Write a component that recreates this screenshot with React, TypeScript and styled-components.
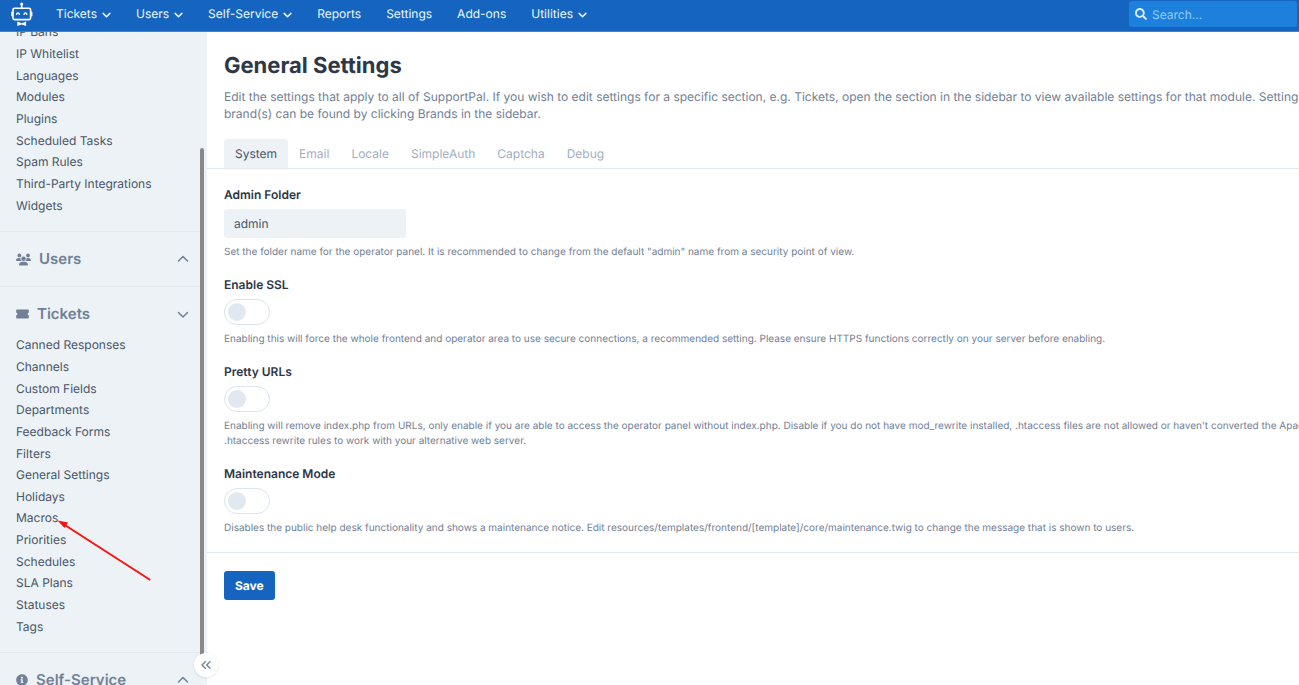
import React from 'react';
import styled, { createGlobalStyle } from 'styled-components';
import { ChevronsLeft } from 'lucide-react';
import { FaInfoCircle, FaSearch } from 'react-icons/fa';
import { FaUsers } from 'react-icons/fa6';

const GlobalStyle = createGlobalStyle`
  *, *::before, *::after { box-sizing: border-box; }
  html, body, #root { height: 100%; }
  body {
    margin: 0;
    overflow: hidden;
    background: #fff;
    color: #4a5568;
    font-family: Inter, "Liberation Sans", sans-serif;
    font-size: 12px;
    text-rendering: geometricPrecision;
  }
  button, input { font: inherit; text-rendering: inherit; }
  h1, h2, p, ul { margin: 0; padding: 0; }
  ul { list-style: none; }
`;

const Page = styled.div`
  display: flex;
  flex-direction: column;
  height: 100vh;
`;

const TopBar = styled.header`
  flex: none;
  display: flex;
  align-items: center;
  height: 32px;
  padding: 0 2px 3px 10px;
  background: #1565c0;
  border-bottom: 1px solid #3b82d6;
`;

const Logo = styled.a`
  display: flex;
  width: 24px;
  margin-right: 22px;
`;

const Nav = styled.nav`
  display: flex;
  gap: 25px;
`;

const NavLink = styled.a`
  display: flex;
  align-items: center;
  gap: 5px;
  color: #ebf8ff;
  line-height: 20px;
  text-decoration: none;
  white-space: nowrap;
`;

const SearchBox = styled.label`
  display: flex;
  align-items: center;
  gap: 5px;
  width: 168px;
  height: 26px;
  margin-left: auto;
  padding: 0 6px;
  border-radius: 3px;
  background: #1e80dd;
  color: #d6ebfb;
`;

const SearchInput = styled.input`
  flex: 1;
  min-width: 0;
  padding: 0;
  border: 0;
  outline: 0;
  background: transparent;
  color: #fff;
  &::placeholder { color: #90cdf4; opacity: 1; }
`;

const Body = styled.div`
  flex: 1;
  display: flex;
  min-height: 0;
`;

const Sidebar = styled.aside`
  position: relative;
  flex: none;
  width: 207px;
  background: #ecf2f6;
`;

const SidebarScroll = styled.div`
  height: 100%;
  margin-right: 3px;
  overflow: hidden;
`;

const Section = styled.section<{ $open?: boolean }>`
  padding-bottom: ${(p) => (p.$open ? 15 : 7)}px;
  border-bottom: 1px solid #e2e8f0;
  &:first-child { margin-top: -11px; }
`;

const SectionToggle = styled.button`
  display: flex;
  align-items: center;
  gap: 8px;
  width: 100%;
  padding: 17px 15px 10px 16px;
  border: 0;
  background: transparent;
  color: #718096;
  font-size: 15px;
  font-weight: 600;
  line-height: 20px;
  text-align: left;
  svg:last-child { margin-left: auto; }
`;

const LinkList = styled.ul<{ $height: number }>`
  display: grid;
  grid-auto-rows: 1fr;
  align-items: center;
  height: ${(p) => p.$height}px;
  padding-left: 16px;
`;

const SideLink = styled.a`
  display: block;
  color: #4a5568;
  line-height: 21px;
  text-decoration: none;
`;

const ScrollThumb = styled.div`
  position: absolute;
  top: 116px;
  bottom: 20px;
  right: 3px;
  width: 4px;
  border-radius: 2px;
  background: #888;
`;

const Collapse = styled.button`
  position: absolute;
  right: -11px;
  bottom: 8px;
  display: flex;
  align-items: center;
  justify-content: center;
  width: 24px;
  height: 24px;
  padding: 0;
  border: 0;
  border-radius: 50%;
  background: #fff;
  color: #718096;
  box-shadow: 0 1px 3px rgba(0, 0, 0, 0.1);
`;

const Pointer = styled.svg`
  position: absolute;
  left: 56px;
  top: 486px;
`;

const Main = styled.main`
  flex: 1;
  min-width: 0;
  overflow: hidden;
`;

const Intro = styled.div`
  padding: 21px 17px 17px;
`;

const Title = styled.h1`
  color: #2d3748;
  font-size: 22px;
  font-weight: 700;
  line-height: 26px;
`;

const Lead = styled.p`
  margin-top: 9px;
  color: #718096;
  line-height: 17px;
  white-space: nowrap;
`;

const Tabs = styled.div`
  display: flex;
  padding-left: 17px;
  border-bottom: 1px solid #e2e8f0;
`;

const Tab = styled.button<{ $active?: boolean }>`
  height: 29px;
  padding: 0 11px;
  border: 0;
  border-radius: 3px 3px 0 0;
  background: ${(p) => (p.$active ? '#ecf2f6' : 'transparent')};
  color: ${(p) => (p.$active ? '#4a5568' : '#a0aec0')};
`;

const Form = styled.form`
  padding-top: 17px;
`;

const Field = styled.div`
  display: flex;
  flex-direction: column;
  align-items: flex-start;
  padding: 0 17px;
  margin-bottom: 16px;
`;

const Label = styled.label`
  color: #2d3748;
  font-weight: 600;
  line-height: 18px;
`;

const TextInput = styled.input`
  width: 182px;
  height: 29px;
  margin-top: 5px;
  padding: 0 10px;
  border: 0;
  border-radius: 3px;
  background: #ecf2f6;
  color: #4a5568;
`;

const Switch = styled.input`
  appearance: none;
  display: flex;
  align-items: center;
  width: 46px;
  height: 26px;
  margin: 5px 0 0;
  padding: 0 3px;
  border: 1px solid #dce4ed;
  border-radius: 13px;
  background: #fff;
  &::before {
    content: '';
    width: 18px;
    height: 18px;
    border-radius: 50%;
    background: #e2e8f0;
  }
  &:checked { justify-content: flex-end; }
`;

const Help = styled.p`
  margin-top: 7px;
  color: #718096;
  font-size: 10px;
  line-height: 15px;
  white-space: nowrap;
`;

const Actions = styled.div`
  padding: 18px 17px;
  border-top: 1px solid #e2e8f0;
`;

const SaveButton = styled.button`
  height: 29px;
  padding: 0 11px;
  border: 0;
  border-radius: 3px;
  background: #1565c0;
  color: #fff;
  font-weight: 700;
`;

const Chevron = ({ up, size }: { up?: boolean; size: number }) => (
  <svg width={size} height={size} viewBox="0 0 12 12" fill="none" stroke="currentColor"
    strokeWidth={size < 12 ? 2 : 1.5} strokeLinecap="round" strokeLinejoin="round" aria-hidden="true">
    <path d={up ? 'M1.500 8 6 3.500l4.500 4.500' : 'M1.500 4.500 6 9l4.500-4.500'} />
  </svg>
);

const TicketIcon = () => (
  <svg width="13" height="10" viewBox="0 0 14 10" preserveAspectRatio="none" fill="currentColor" aria-hidden="true">
    <path d="M1 .5h12a.8.8 0 0 1 .8.8v2.400a1.300 1.300 0 0 0 0 2.600v2.400a.8.8 0 0 1-.8.8H1a.8.8 0 0 1-.8-.8V6.300a1.300 1.300 0 0 0 0-2.600V1.300A.8.8 0 0 1 1 .5Z" />
  </svg>
);

const RobotLogo = () => (
  <svg width="24" height="26" viewBox="0 0 24 26" fill="none" stroke="#fff" strokeWidth="1.600"
    strokeLinecap="round" strokeLinejoin="round" aria-hidden="true">
    <path d="M11.700 4v3" />
    <circle cx="11.700" cy="3" r="1.500" fill="#fff" stroke="none" />
    <rect x="3" y="7.200" width="17.600" height="11.400" rx="1.600" />
    <path d="M2 11.400v3.400M21.600 11.400v3.400" />
    <path d="M6.600 13.400c.3-2 2.500-2 2.800 0M14 13.400c.3-2 2.500-2 2.800 0" strokeWidth="1.400" />
    <path d="M7.300 20.400 11.700 22.200l4.400-1.800v4.600l-4.400-1.600-4.400 1.600Z" fill="#fff" stroke="none" />
  </svg>
);

const navItems = [
  { text: 'Tickets', menu: true },
  { text: 'Users', menu: true },
  { text: 'Self-Service', menu: true },
  { text: 'Reports' },
  { text: 'Settings' },
  { text: 'Add-ons' },
  { text: 'Utilities', menu: true },
];

const coreLinks = ['IP Bans', 'IP Whitelist', 'Languages', 'Modules', 'Plugins', 'Scheduled Tasks',
  'Spam Rules', 'Third-Party Integrations', 'Widgets'];

const ticketLinks = ['Canned Responses', 'Channels', 'Custom Fields', 'Departments', 'Feedback Forms',
  'Filters', 'General Settings', 'Holidays', 'Macros', 'Priorities', 'Schedules', 'SLA Plans',
  'Statuses', 'Tags'];

const tabs = ['System', 'Email', 'Locale', 'SimpleAuth', 'Captcha', 'Debug'];

const Links = ({ items, height }: { items: string[]; height: number }) => (
  <LinkList $height={height}>
    {items.map((item) => (
      <li key={item}><SideLink href="#">{item}</SideLink></li>
    ))}
  </LinkList>
);

export default function App() {
  return (
    <>
      <GlobalStyle />
      <Page>
        <TopBar>
          <Logo href="#" aria-label="Home"><RobotLogo /></Logo>
          <Nav>
            {navItems.map((item) => (
              <NavLink href="#" key={item.text}>
                {item.text}
                {item.menu && <Chevron size={9} />}
              </NavLink>
            ))}
          </Nav>
          <SearchBox>
            <FaSearch size={12} aria-hidden="true" />
            <SearchInput type="search" placeholder="Search..." aria-label="Search" />
          </SearchBox>
        </TopBar>
        <Body>
          <Sidebar>
            <SidebarScroll>
              <Section $open>
                <Links items={coreLinks} height={195} />
              </Section>
              <Section>
                <SectionToggle type="button">
                  <FaUsers size={15} />Users<Chevron up size={12} />
                </SectionToggle>
              </Section>
              <Section $open>
                <SectionToggle type="button">
                  <TicketIcon />Tickets<Chevron size={12} />
                </SectionToggle>
                <Links items={ticketLinks} height={303} />
              </Section>
              <Section>
                <SectionToggle type="button">
                  <FaInfoCircle size={12} />Self-Service<Chevron up size={12} />
                </SectionToggle>
              </Section>
            </SidebarScroll>
            <ScrollThumb />
            <Collapse type="button" aria-label="Collapse sidebar"><ChevronsLeft size={16} /></Collapse>
            <Pointer width="98" height="66" viewBox="0 0 98 66" aria-hidden="true">
              <path d="M93.500 61.500 8 6.500" stroke="#ff1010" strokeWidth="2" strokeLinecap="round" />
              <path d="M1.500 2.500 12 4.500 8.500 10Z" fill="#ff1010" />
            </Pointer>
          </Sidebar>
          <Main>
            <Intro>
              <Title>General Settings</Title>
              <Lead>
                Edit the settings that apply to all of SupportPal. If you wish to edit settings for a specific section, e.g. Tickets, open the section in the sidebar to view available settings for that module. Settings related to specific
                <br />
                brand(s) can be found by clicking Brands in the sidebar.
              </Lead>
            </Intro>
            <Tabs role="tablist">
              {tabs.map((tab, i) => (
                <Tab key={tab} type="button" role="tab" aria-selected={i === 0} $active={i === 0}>{tab}</Tab>
              ))}
            </Tabs>
            <Form>
              <Field>
                <Label htmlFor="folder">Admin Folder</Label>
                <TextInput id="folder" defaultValue="admin" />
                <Help>Set the folder name for the operator panel. It is recommended to change from the default "admin" name from a security point of view.</Help>
              </Field>
              <Field>
                <Label htmlFor="ssl">Enable SSL</Label>
                <Switch id="ssl" type="checkbox" />
                <Help>Enabling this will force the whole frontend and operator area to use secure connections, a recommended setting. Please ensure HTTPS functions correctly on your server before enabling.</Help>
              </Field>
              <Field>
                <Label htmlFor="pretty">Pretty URLs</Label>
                <Switch id="pretty" type="checkbox" />
                <Help>
                  Enabling will remove index.php from URLs, only enable if you are able to access the operator panel without index.php. Disable if you do not have mod_rewrite installed, .htaccess files are not allowed or haven't converted the Apache
                  <br />
                  .htaccess rewrite rules to work with your alternative web server.
                </Help>
              </Field>
              <Field>
                <Label htmlFor="maintenance">Maintenance Mode</Label>
                <Switch id="maintenance" type="checkbox" />
                <Help>Disables the public help desk functionality and shows a maintenance notice. Edit resources/templates/frontend/[template]/core/maintenance.twig to change the message that is shown to users.</Help>
              </Field>
              <Actions>
                <SaveButton type="button">Save</SaveButton>
              </Actions>
            </Form>
          </Main>
        </Body>
      </Page>
    </>
  );
}
